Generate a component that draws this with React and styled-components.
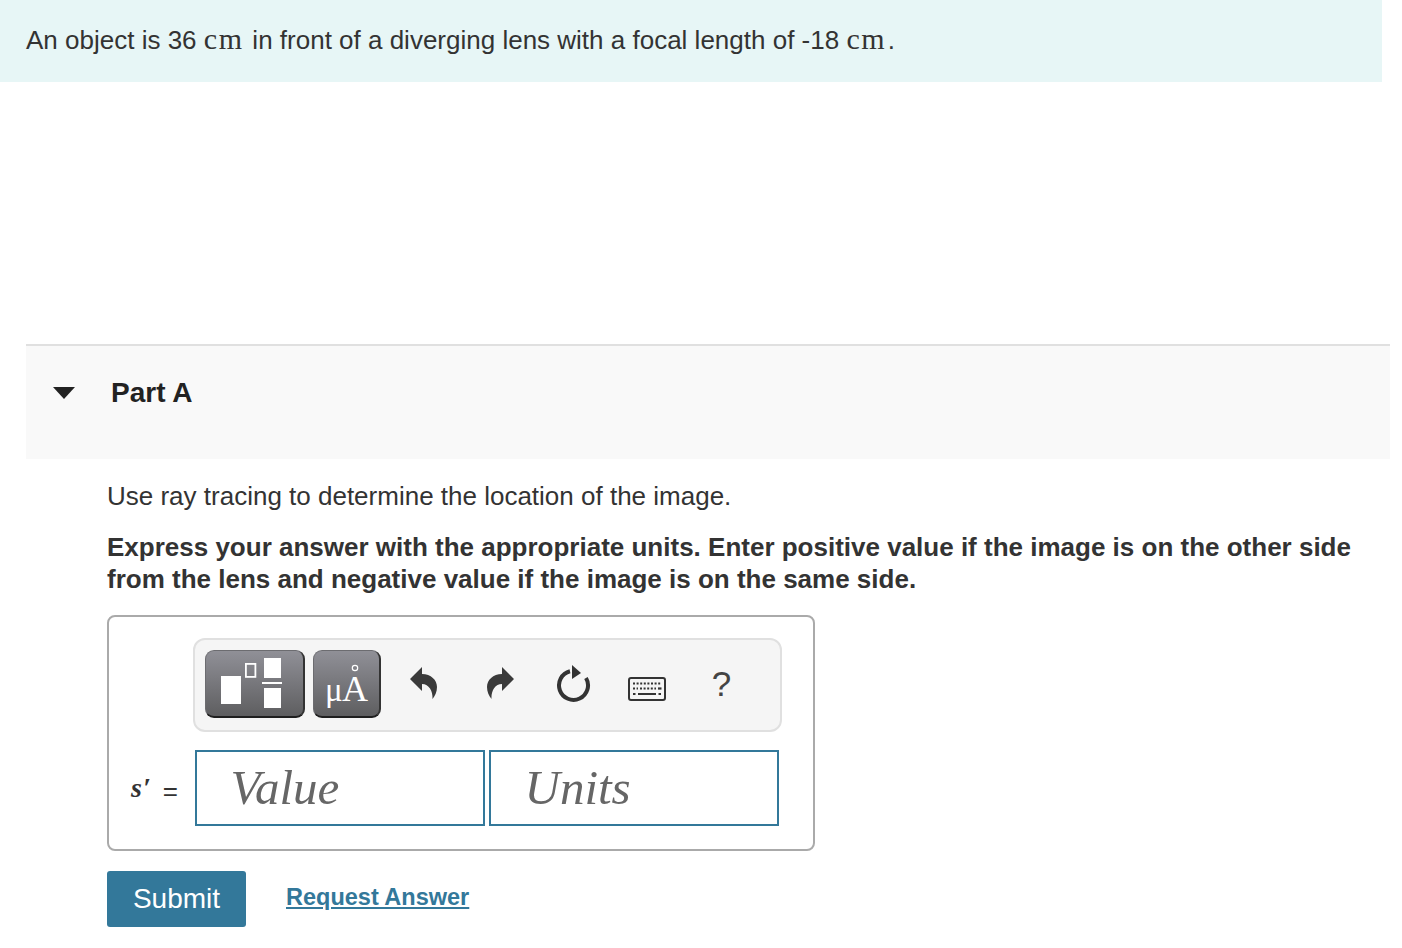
import React from "react";
import styled, { createGlobalStyle } from "styled-components";

const Global = createGlobalStyle`
  html, body { margin: 0; padding: 0; background: #fff; }
  body { font-family: "Liberation Sans", Arial, sans-serif; color: #333; }
`;
const Page = styled.div`width: 1402px; height: 948px; overflow: hidden;`;
const Banner = styled.div`
  width: 1382px; height: 82px; box-sizing: border-box; background: #e7f6f6;
  padding: 24px 0 0 26px; font-size: 26px; line-height: 32px; color: #333; white-space: nowrap;
`;
const Mathy = styled.span`font-family: "Liberation Serif", serif; font-size: 30px; letter-spacing: 1.6px; line-height: 20px; margin-right: 1.5px;`;
const PartHeader = styled.div`
  margin: 262px 12px 0 26px; height: 115px; box-sizing: border-box;
  border-top: 2px solid #e0e0e0; background: #f9f9f9;
  display: flex; align-items: flex-start; padding: 31px 0 0 27px;
`;
const Caret = styled.div`
  width: 0; height: 0; margin-top: 10px;
  border-left: 11px solid transparent; border-right: 11px solid transparent; border-top: 12px solid #222;
`;
const PartTitle = styled.div`margin-left: 36px; font-weight: 700; font-size: 28px; line-height: 32px; color: #222;`;
const Body = styled.div`padding: 21px 0 0 107px; width: 1270px;`;
const Para = styled.p`margin: 0; font-size: 26px; line-height: 32px; color: #333;`;
const Bold = styled.p`margin: 19px 0 0; font-size: 26px; line-height: 32px; font-weight: 700; color: #333; width: 1270px;`;
const AnswerBox = styled.div`
  margin-top: 20px; width: 708px; height: 236px; box-sizing: border-box;
  border: 2px solid #aaa; border-radius: 8px; padding: 21px 0 0 84px;
`;
const Toolbar = styled.div`
  width: 589px; height: 94px; box-sizing: border-box; background: #f5f5f5;
  border: 2px solid #e0e0e0; border-radius: 12px;
  display: flex; align-items: center; padding: 0 0 0 10px;
`;
const TemplateButton = styled.div`
  width: ${p => p.$w}px; height: 68px; box-sizing: border-box; margin: -2px 8px 0 0;
  border-radius: 9px; border: 1px solid #6c6c70; border-bottom: 2px solid #1f1f1f; border-right: 2px solid #333;
  background: linear-gradient(#909097, #5e5e60); display: flex; align-items: center; justify-content: center;
  flex-shrink: 0;
`;
const Tool = styled.div`
  width: ${p => p.$w}px; display: flex; justify-content: center; align-items: center; flex-shrink: 0;
  margin-top: ${p => p.$top || 0}px;
`;
const Help = styled.div`
  width: 65px; font-size: 35px; line-height: 40px; text-align: center; color: #444; margin-top: -3px; flex-shrink: 0;
`;
const InputRow = styled.div`display: flex; align-items: center; margin-top: 18px; margin-left: -62px;`;
const Label = styled.div`
  width: 64px; font-family: "Liberation Serif", serif; color: #333; white-space: nowrap;
  display: flex; gap: 11px; align-items: center;
`;
const SVar = styled.span`font-style: italic; font-weight: 700; font-size: 28px; line-height: 1; letter-spacing: 1px;`;
const Eq = styled.span`font-family: "Liberation Sans", sans-serif; font-size: 26px; line-height: 1; margin-top: 5px;`;
const Field = styled.div`
  width: 290px; height: 76px; box-sizing: border-box; border: 2px solid #33789a; margin-right: 4px;
  background: #fff; font-family: "Liberation Serif", serif; font-style: italic; font-size: 49px;
  color: #666; padding: 6px 0 0 33.5px; line-height: 60px;
`;
const Actions = styled.div`display: flex; align-items: center; margin-top: 20px;`;
const Submit = styled.div`
  width: 139px; height: 56px; background: #33789a; color: #fff; border-radius: 3px;
  font-size: 28px; display: flex; align-items: center; justify-content: center;
`;
const Link = styled.a`
  margin-left: 40px; color: #33789a; font-weight: 700; font-size: 23.5px; text-decoration: underline;
  margin-top: -4px;
`;

const TemplateIcon = () => (
  <svg width="74" height="60" viewBox="0 0 74 60">
    <rect x="3" y="22" width="20" height="28" fill="#fff" />
    <rect x="27.9" y="9.9" width="9.5" height="13" fill="none" stroke="#fff" strokeWidth="1.8" />
    <rect x="46" y="4" width="17" height="20" fill="#fff" />
    <rect x="44" y="28" width="20" height="2" fill="#fff" />
    <rect x="46" y="34" width="17" height="20" fill="#fff" />
  </svg>
);
const MicroAngstrom = () => (
  <svg width="50" height="56" viewBox="0 0 50 56">
    <text x="3" y="45" fontFamily="Liberation Serif" fontSize="33" fill="#fff">μ</text>
    <text x="20" y="45" fontFamily="Liberation Serif" fontSize="36" fill="#fff">A</text>
    <circle cx="33" cy="12" r="2.7" fill="none" stroke="#fff" strokeWidth="1.2" />
  </svg>
);
const ArrowIcon = ({ flip }) => (
  <svg width="30" height="36" viewBox="0 0 30 36" style={flip ? { transform: "scaleX(-1)" } : undefined}>
    <path d="M1 12 L13 0 L13 7 C22 7 28 13 28 20 C28 25 26 29 23.5 32 C24 24 20 17 13 17 L13 24 Z" fill="#3a3a3a" />
  </svg>
);
const RefreshIcon = () => (
  <svg width="36" height="40" viewBox="0 0 36 40">
    <path d="M15 6.3 A14.5 14.5 0 1 0 31 13" fill="none" stroke="#333" strokeWidth="4" />
    <path d="M17 0 L26 8 L17 14 Z" fill="#333" />
  </svg>
);
const KeyboardIcon = () => (
  <svg width="38" height="24" viewBox="0 0 38 24">
    <rect x="1" y="1" width="36" height="22" rx="2" fill="#f5f5f5" stroke="#333" strokeWidth="2" />
    <path d="M5 6.5h28" stroke="#333" strokeWidth="2.2" strokeDasharray="2 1.6" />
    <path d="M5 11.5h5M12 11.5h16" stroke="#333" strokeWidth="2.2" strokeDasharray="2 1.6" />
    <path d="M30 11.5h3.5" stroke="#333" strokeWidth="2.2" />
    <path d="M5 17h2.5M10 17h18M30.5 17h2.5" stroke="#333" strokeWidth="2.2" />
  </svg>
);

export default function App() {
  return (
    <Page>
      <Global />
      <Banner>
        An object is 36 <Mathy>cm</Mathy> in front of a diverging lens with a focal length of -18 <Mathy>cm</Mathy>.
      </Banner>
      <PartHeader>
        <Caret />
        <PartTitle>Part A</PartTitle>
      </PartHeader>
      <Body>
        <Para>Use ray tracing to determine the location of the image.</Para>
        <Bold>Express your answer with the appropriate units. Enter positive value if the image is on the other side from the lens and negative value if the image is on the same side.</Bold>
        <AnswerBox>
          <Toolbar>
            <TemplateButton $w={100}><TemplateIcon /></TemplateButton>
            <TemplateButton $w={68}><MicroAngstrom /></TemplateButton>
            <Tool $w={70}><ArrowIcon /></Tool>
            <Tool $w={82}><ArrowIcon flip /></Tool>
            <Tool $w={64}><RefreshIcon /></Tool>
            <Tool $w={84} $top={8}><KeyboardIcon /></Tool>
            <Help>?</Help>
          </Toolbar>
          <InputRow>
            <Label><SVar>s′</SVar><Eq>=</Eq></Label>
            <Field>Value</Field>
            <Field>Units</Field>
          </InputRow>
        </AnswerBox>
        <Actions>
          <Submit>Submit</Submit>
          <Link>Request Answer</Link>
        </Actions>
      </Body>
    </Page>
  );
}
